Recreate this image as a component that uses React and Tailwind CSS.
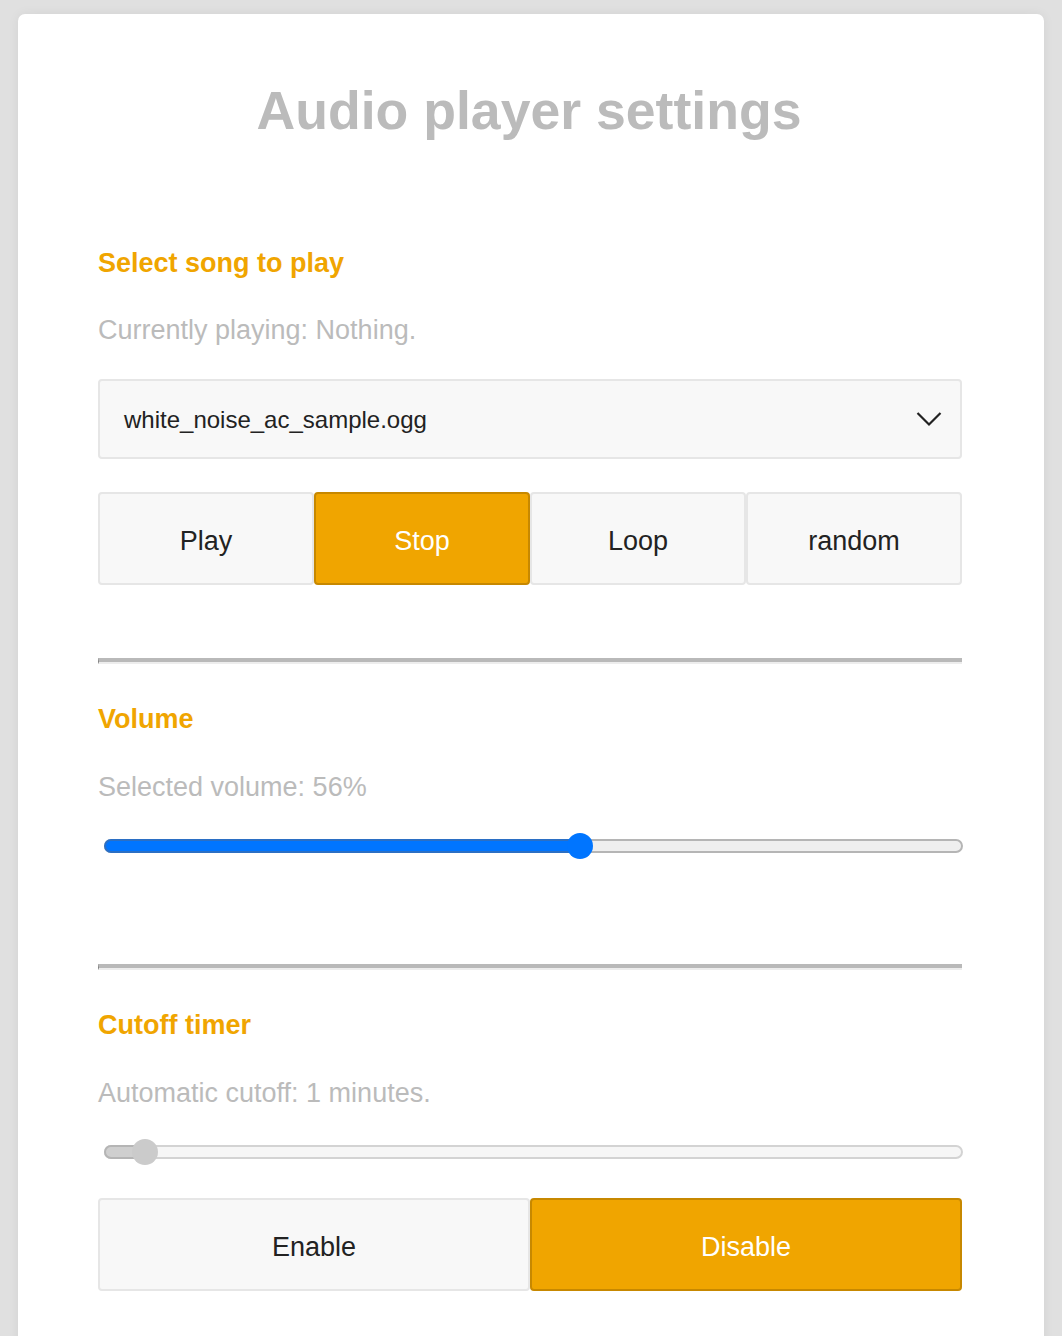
import React from "react";

const font = { fontFamily: '"Liberation Sans", Arial, sans-serif' };

function Hr() {
  return (
    <div className="h-[6px] border-t-[4px] border-b-[2px] border-l border-t-[#b9b9b9] border-b-[#ededed] border-l-[#7d7d7d]" />
  );
}

function Heading({ children, className = "" }) {
  return (
    <div className={"text-[27px] leading-[30px] font-bold text-[#f0a500] " + className}>
      {children}
    </div>
  );
}

function Sub({ children, className = "" }) {
  return (
    <div className={"text-[27px] leading-[30px] text-[#bbbbbb] " + className}>
      {children}
    </div>
  );
}

function Btn({ children, active }) {
  return (
    <div
      className={
        "flex items-center justify-center pt-[6px] rounded-[4px] border-2 text-[27px] " +
        (active
          ? "bg-[#f0a500] border-[#c78800] text-white"
          : "bg-[#f8f8f8] border-[#e6e6e6] text-[#222222]")
      }
    >
      {children}
    </div>
  );
}

export default function App() {
  return (
    <div className="min-h-[1336px] bg-[#e0e0e0] pt-[14px] px-[18px]" style={font}>
      <div className="bg-white rounded-t-[7px] min-h-[1322px] pl-[80px] pr-[82px] pt-[66px] pb-[60px] shadow-[0_0_12px_rgba(0,0,0,0.06)]">
        <h1 className="text-center text-[53.6px] leading-[60px] font-bold text-[#bbbbbb] -ml-[2px]">
          Audio player settings
        </h1>

        <Heading className="mt-[108px]">Select song to play</Heading>
        <Sub className="mt-[37px]">Currently playing: Nothing.</Sub>

        <div className="mt-[34px] h-[80px] rounded-[4px] border-2 border-[#e6e6e6] bg-[#f8f8f8] flex items-center justify-between pl-[24px] pr-[18px]">
          <span className="text-[24px] text-[#222222] pt-[2px]">white_noise_ac_sample.ogg</span>
          <svg width="26" height="16" viewBox="0 0 26 16" fill="none">
            <polyline points="1.5,2 13,13.5 24.5,2" stroke="#222" strokeWidth="2.2" />
          </svg>
        </div>

        <div className="mt-[33px] grid grid-cols-4 h-[93px]">
          <Btn>Play</Btn>
          <Btn active>Stop</Btn>
          <Btn>Loop</Btn>
          <Btn>random</Btn>
        </div>

        <div className="mt-[73px]">
          <Hr />
        </div>

        <Heading className="mt-[40px]">Volume</Heading>
        <Sub className="mt-[38px]">Selected volume: 56%</Sub>

        <div className="mt-[31px] relative h-[26px] ml-[6px] -mr-[1px]">
          <div className="absolute left-0 right-0 top-[6px] h-[14px] rounded-full border-2 border-[#b5b5b5] bg-[#efefef]" />
          <div className="absolute left-0 top-[6px] h-[14px] w-[478px] rounded-l-full border-2 border-[#2b6fc4] bg-[#0075ff]" />
          <div className="absolute left-[463px] top-0 h-[26px] w-[26px] rounded-full bg-[#0075ff]" />
        </div>

        <div className="mt-[105px]">
          <Hr />
        </div>

        <Heading className="mt-[40px]">Cutoff timer</Heading>
        <Sub className="mt-[38px]">Automatic cutoff: 1 minutes.</Sub>

        <div className="mt-[31px] relative h-[26px] ml-[6px] -mr-[1px]">
          <div className="absolute left-0 right-0 top-[6px] h-[14px] rounded-full border-2 border-[#d3d3d3] bg-[#f6f6f6]" />
          <div className="absolute left-0 top-[6px] h-[14px] w-[44px] rounded-l-full border-2 border-[#b5b5b5] bg-[#cfcfcf]" />
          <div className="absolute left-[28px] top-0 h-[26px] w-[26px] rounded-full bg-[#cbcbcb]" />
        </div>

        <div className="mt-[33px] grid grid-cols-2 h-[93px]">
          <Btn>Enable</Btn>
          <Btn active>Disable</Btn>
        </div>
      </div>
    </div>
  );
}
